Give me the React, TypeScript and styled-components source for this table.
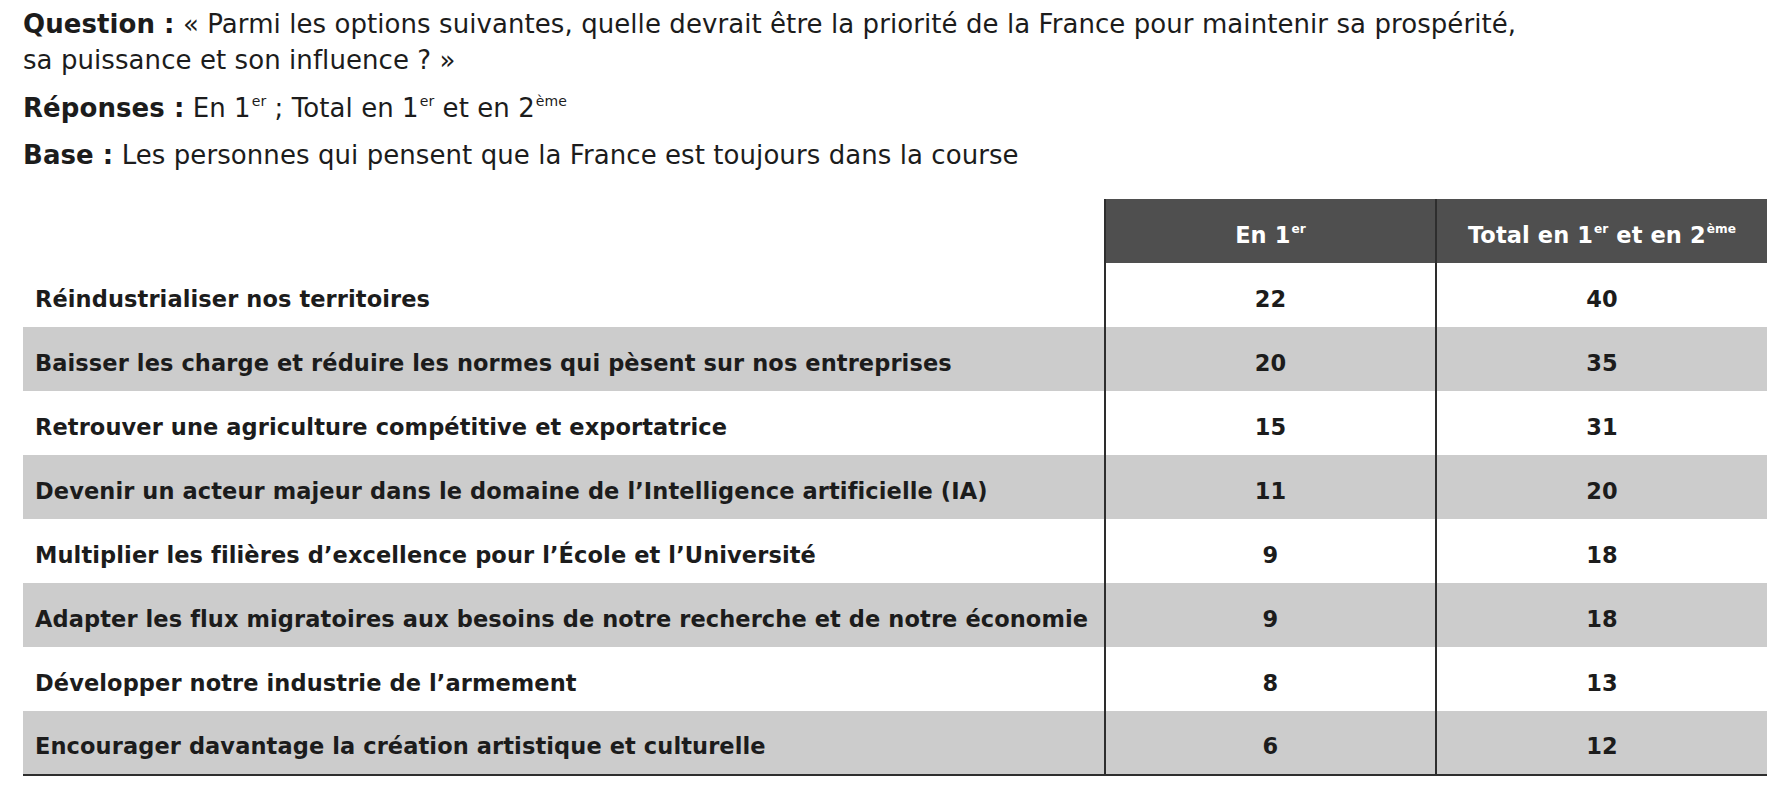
import React from 'react';
import styled, { createGlobalStyle } from 'styled-components';

const GlobalStyle = createGlobalStyle`
  html, body {
    margin: 0;
    padding: 0;
    background: #fff;
  }
  body {
    font-family: "DejaVu Sans", "Noto Sans", "Liberation Sans", sans-serif;
    color: #1c1c1c;
  }
`;

const Page = styled.div`
  width: 1788px;
  height: 796px;
  padding: 6px 21px 0 23px;
  box-sizing: border-box;
  overflow: hidden;
`;

const Intro = styled.div`
  display: flex;
  flex-direction: column;
  gap: 11.5px;
  font-size: 26px;
  line-height: 36px;
  letter-spacing: 0.07px;
  font-weight: 400;
`;

const Line = styled.p`
  margin: 0;
`;

const Label = styled.strong`
  font-weight: 700;
`;

const Sup = styled.sup`
  font-size: 0.54em;
  line-height: 0;
  vertical-align: 0;
  position: relative;
  top: -0.75em;
  margin-left: 1px;
`;

const Table = styled.table`
  margin-top: 26px;
  width: 1744px;
  border-collapse: collapse;
  table-layout: fixed;
  font-size: 22.5px;
  font-weight: 700;
  letter-spacing: 0.1px;
  border-bottom: 2px solid #2e2e2e;
`;

const HeadRow = styled.tr`
  height: 64px;
`;

const HeadCell = styled.th<{ $dark?: boolean }>`
  padding: 7px 0 0;
  background: ${({ $dark }) => ($dark ? '#4f4f4f' : 'transparent')};
  color: #fff;
  font-weight: 700;
  text-align: center;
  border-left: ${({ $dark }) => ($dark ? '2px solid #2e2e2e' : 'none')};
`;

const Row = styled.tr<{ $shaded: boolean }>`
  height: 64px;
  background: ${({ $shaded }) => ($shaded ? '#cccccc' : '#ffffff')};
`;

const LabelCell = styled.td`
  padding: 7px 0 0 12px;
  text-align: left;
  white-space: nowrap;
  color: #1c1c1c;
`;

const ValueCell = styled.td`
  padding: 7px 0 0;
  text-align: center;
  border-left: 2px solid #2e2e2e;
  color: #1c1c1c;
`;

const rows: [string, number, number][] = [
  ['Réindustrialiser nos territoires', 22, 40],
  ['Baisser les charge et réduire les normes qui pèsent sur nos entreprises', 20, 35],
  ['Retrouver une agriculture compétitive et exportatrice', 15, 31],
  ['Devenir un acteur majeur dans le domaine de l’Intelligence artificielle (IA)', 11, 20],
  ['Multiplier les filières d’excellence pour l’École et l’Université', 9, 18],
  ['Adapter les flux migratoires aux besoins de notre recherche et de notre économie', 9, 18],
  ['Développer notre industrie de l’armement', 8, 13],
  ['Encourager davantage la création artistique et culturelle', 6, 12],
];

export default function App() {
  return (
    <Page>
      <GlobalStyle />
      <Intro>
        <Line>
          <Label>Question :</Label> « Parmi les options suivantes, quelle devrait être la priorité de la France pour maintenir sa prospérité,
          <br />
          sa puissance et son influence ? »
        </Line>
        <Line>
          <Label>Réponses :</Label> En 1<Sup>er</Sup> ; Total en 1<Sup>er</Sup> et en 2<Sup>ème</Sup>
        </Line>
        <Line>
          <Label>Base :</Label> Les personnes qui pensent que la France est toujours dans la course
        </Line>
      </Intro>
      <Table>
        <colgroup>
          <col style={{ width: 1082 }} />
          <col style={{ width: 331 }} />
          <col style={{ width: 331 }} />
        </colgroup>
        <thead>
          <HeadRow>
            <HeadCell />
            <HeadCell $dark>
              En 1<Sup>er</Sup>
            </HeadCell>
            <HeadCell $dark>
              Total en 1<Sup>er</Sup> et en 2<Sup>ème</Sup>
            </HeadCell>
          </HeadRow>
        </thead>
        <tbody>
          {rows.map(([label, first, total], i) => (
            <Row key={label} $shaded={i % 2 === 1}>
              <LabelCell>{label}</LabelCell>
              <ValueCell>{first}</ValueCell>
              <ValueCell>{total}</ValueCell>
            </Row>
          ))}
        </tbody>
      </Table>
    </Page>
  );
}
